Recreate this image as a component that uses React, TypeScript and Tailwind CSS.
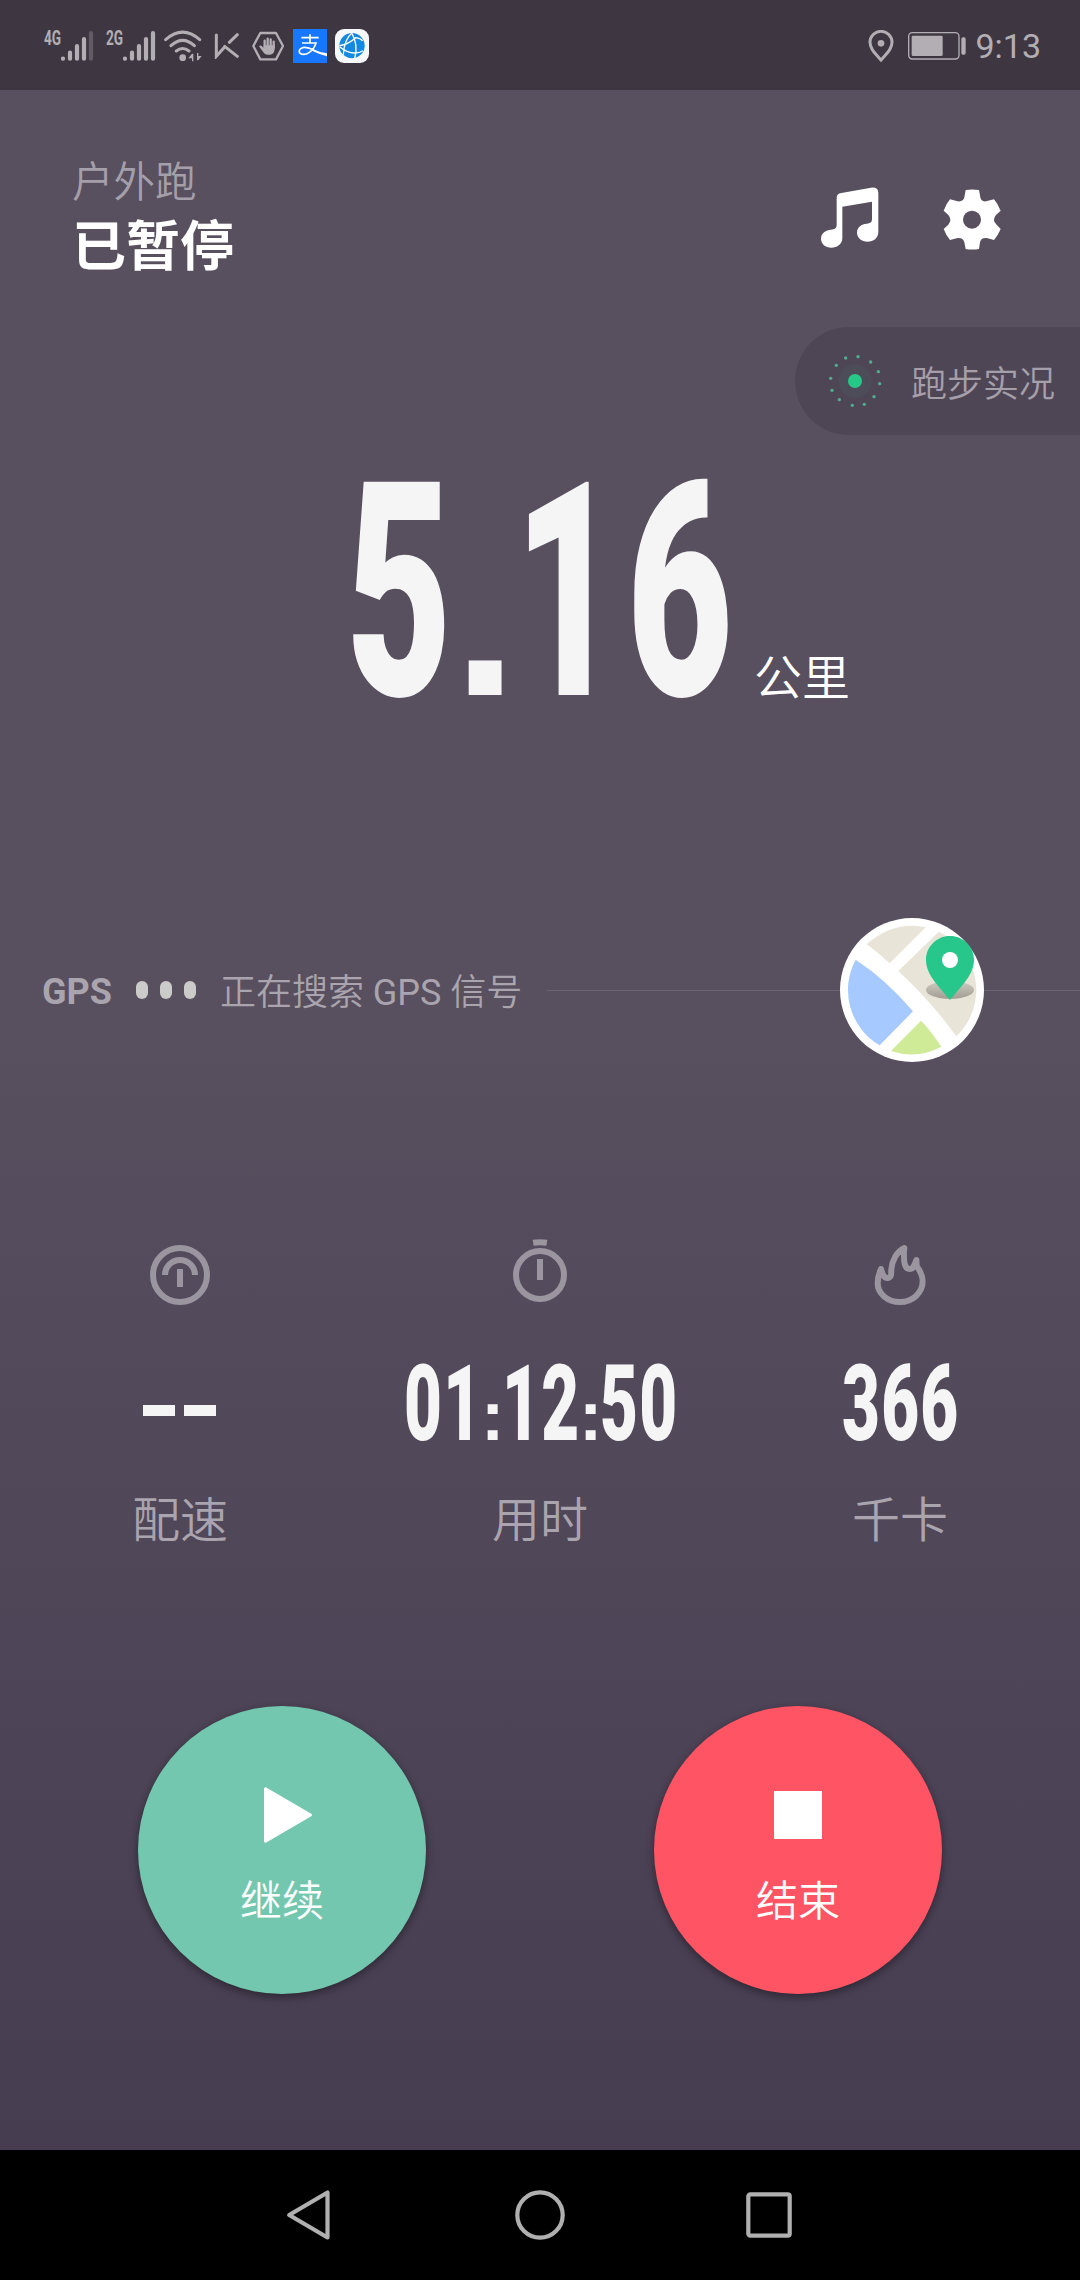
import type { ReactNode } from 'react'

const METRICS = [
  { label: '配速', icon: <PaceIcon /> },
  { label: '用时', icon: <TimerIcon /> },
  { label: '千卡', icon: <FlameIcon /> },
]

const RADAR_DOTS = [
  [197, 594], [234, 590], [272, 606], [295, 635], [299, 671], [282, 710],
  [253, 733], [217, 736], [178, 719], [156, 691], [152, 655], [169, 616],
]

function Signal({ label, full }: { label: string; full?: boolean }) {
  return (
    <div className="flex h-[32px] w-[51px]">
      <span className="w-[17px] origin-left scale-x-[0.68] text-[20px] leading-[16px] font-bold">{label}</span>
      <svg className="h-[32px] w-[34px] shrink-0" viewBox="0 0 34 32" stroke="currentColor" strokeWidth="4.2" strokeLinecap="round">
        <path d="M2 28.600v.1M9 22.500v6.200M16 16v12.700M23 9v19.700" />
        <path d="M30 3v25.700" strokeOpacity={full ? 1 : 0.3} />
      </svg>
    </div>
  )
}

function StatusBar() {
  return (
    <div className="flex h-[90px] shrink-0 items-center bg-[#3e3742] pt-[2px] pr-[39px] pl-[44px] text-[#b3aeb4]">
      <Signal label="4G" />
      <div className="w-[11px]" />
      <Signal label="2G" full />
      {/* Wi-Fi */}
      <svg className="ml-[7px] h-[34px] w-[38px]" viewBox="402 55 114 102" fill="none" stroke="currentColor" strokeWidth="9" strokeLinecap="round">
        <path d="M407 87Q458 42 509 87M423 105Q458 73 493 105M439 121Q458 106 477 121" />
        <circle cx="458" cy="141" r="10" fill="currentColor" stroke="none" />
        <path d="M486 129v23h4v-23zM475 143l11-14v14zM501 127v22h4v-22zM505 149l10-13h-10z" fill="currentColor" stroke="none" />
      </svg>
      {/* Keep */}
      <svg className="ml-[12px] h-[26px] w-[26px]" viewBox="550 70 78 78" fill="none" stroke="currentColor" strokeWidth="9" strokeLinecap="round">
        <path d="M557 76v64L582 112M596 98l24-23M582 110l38 30" />
      </svg>
      {/* Blocker */}
      <svg className="ml-[12px] h-[30px] w-[32px]" viewBox="666 63 96 90" fill="none" stroke="currentColor" strokeWidth="7" strokeLinejoin="round">
        <path d="M670 108L691 69h47l21 39-21 40h-47z" />
        <path d="M704 115V92M713 112V86M722 112V88M731 114V95" strokeLinecap="round" />
        <path d="M701 106h33v12q-2 16-14 16h-8q-8 0-13-9l-12-16q3-5 8-1l6 6z" fill="currentColor" stroke="none" />
      </svg>
      {/* Alipay */}
      <svg className="ml-[9px] h-[34px] w-[34px] bg-[#1777fe]" viewBox="789 57 102 102" fill="none" stroke="#fff" strokeWidth="5">
        <path d="M814 83h52M840 73v26M816 99h42Q852 118 838 127Q822 138 809 129Q804 118 818 113Q832 110 852 121" />
        <path d="M846 116Q866 126 891 130v9Q866 132 846 122z" fill="#fff" stroke="none" />
      </svg>
      {/* Browser */}
      <svg className="ml-[8px] h-[34px] w-[34px] rounded-[9px] bg-[#f6f8fa]" viewBox="915 57 102 102" fill="none">
        <circle cx="966" cy="107" r="38" fill="#1588e0" />
        <path d="M965 69Q986 105 974 145M928 107Q955 103 977 83M974 83Q990 84 998 92M929 110Q950 128 974 129Q990 129 999 122M965 70Q943 88 940 134" stroke="#fff" strokeWidth="4" />
      </svg>

      <svg className="ml-auto h-[32px] w-[26px]" viewBox="54 57 78 96" fill="none" stroke="currentColor" strokeWidth="9">
        <path d="M93 147C76 127 60 114 60 94a33 33 0 0 1 66 0C126 114 110 127 93 147z" />
        <circle cx="93" cy="97" r="10" fill="currentColor" stroke="none" />
      </svg>
      <svg className="ml-[14px] h-[28px] w-[58px]" viewBox="174 65 174 84" fill="none" stroke="currentColor" strokeWidth="4">
        <rect x="176" y="67" width="151" height="79" rx="11" />
        <rect x="185" y="76" width="93" height="61" rx="4" fill="currentColor" stroke="none" />
        <rect x="334" y="81" width="13" height="52" rx="5" fill="currentColor" stroke="none" />
      </svg>
      <span className="ml-[9px] text-[34px] leading-none">9:13</span>
    </div>
  )
}

function Header() {
  return (
    <header className="flex h-[192px] items-start justify-between pr-[79px] pl-[72px]">
      <div className="pt-[63px]">
        <p className="text-[41.5px] leading-[60px] font-[350] text-[#a59faa]">户外跑</p>
        <h1 className="mt-px text-[54px] leading-[68px] font-bold text-white">已暂停</h1>
      </div>
      <div className="flex gap-[64px] pt-[97px]">
        <svg className="h-[62px] w-[58px]" viewBox="121 79 174 186" fill="#fff">
          <path d="M168 112Q168 98 182 97L271 81Q293 79 293 97V213C293 232 278 243 261 243C243 243 229 231 229 216C229 200 243 189 258 189Q274 189 274 176V123L185 138V232C185 250 170 261 152 261C134 261 121 249 121 234C121 218 136 207 151 207Q168 207 168 193Z" />
        </svg>
        <svg className="h-[62px] w-[58px] overflow-visible" viewBox="489 79 174 186" fill="#fff" fillRule="evenodd">
          <path d="M557 88Q576 85 597 88L601 110Q603 124 618 122L642 116Q654 130 662 150L648 163Q636 177 648 190L662 205Q654 224 642 238L620 232Q603 230 600 245L597 265Q576 268 557 265L553 245Q550 231 533 232L510 238Q498 224 491 205L505 192Q517 177 505 163L491 150Q498 130 510 116L533 122Q550 124 553 110ZM603 177a27 27 0 1 0-54 0a27 27 0 1 0 54 0z" />
        </svg>
      </div>
    </header>
  )
}

function LivePill() {
  return (
    <div className="mt-[45px] flex h-[108px] w-[285px] items-center self-end rounded-l-full bg-[#4f4655] pl-[33px]">
      <svg className="h-[54px] w-[54px]" viewBox="144 582 162 162">
        {RADAR_DOTS.map(([x, y]) => (
          <circle key={`${x}-${y}`} cx={x} cy={y} r="5" fill="#4fae92" />
        ))}
        <circle cx="225" cy="663" r="50" fill="#4c4d59" />
        <circle cx="225" cy="663" r="21" fill="#27c788" />
      </svg>
      <span className="ml-[29px] pt-[7px] text-[36px] leading-[52px] font-[350] whitespace-nowrap text-[#a59faa]">跑步实况</span>
    </div>
  )
}

function Distance() {
  return (
    <div className="mt-[29px] flex h-[267px] items-end pl-[346px] font-black text-[#f5f5f5]">
      <div className="flex w-[389px] items-baseline">
        <div className="w-[107px]">
          <span className="inline-block origin-left scale-x-[0.61] text-[300px] leading-[267px]">5</span>
        </div>
        <span className="w-[61px] font-['Liberation_Sans'] text-[232px] leading-none font-bold">.</span>
        <div className="w-[221px]">
          <span className="inline-block origin-left scale-x-[0.61] text-[300px] leading-[267px] tracking-[11px]">16</span>
        </div>
      </div>
      <span className="mb-[17px] ml-[19px] text-[48px] leading-[70px] font-[350] whitespace-nowrap text-white">公里</span>
    </div>
  )
}

function MapButton() {
  return (
    <svg className="h-[144px] w-[144px] shrink-0" viewBox="60 54 432 432">
      <defs>
        <linearGradient id="pinShadow" x1="0" y1="0" x2="0" y2="1">
          <stop offset="0" stopColor="#cfccc1" />
          <stop offset="1" stopColor="#a19d93" />
        </linearGradient>
      </defs>
      <circle cx="276" cy="270" r="216" fill="#fff" />
      <path d="M140 133Q200 78 276 77Q296 77 317 82L209 190Q175 158 140 133z" fill="#e8e5d8" />
      <path d="M356 95A192 192 0 0 1 409 409Q330 300 235 213z" fill="#e8e5d8" />
      <path d="M107 179Q200 240 279 334L179 436A192 192 0 0 1 107 179z" fill="#a6caff" />
      <path d="M303 362Q335 395 364 440A192 192 0 0 1 213 453z" fill="#cfeb98" />
      <ellipse cx="390" cy="270" rx="72" ry="27" fill="url(#pinShadow)" />
      <path d="M390 108C430 108 462 140 462 180C462 222 428 254 390 300C352 254 318 222 318 180C318 140 350 108 390 108z" fill="#27c78b" />
      <circle cx="390" cy="180" r="24" fill="#fff" />
    </svg>
  )
}

function GpsRow() {
  return (
    <div className="mt-[187px] flex h-[144px] items-center pl-[42px] text-[36px] text-[#aaa4ae]">
      <span className="w-[94px] pt-[4px] leading-[52px] font-bold">GPS</span>
      <div className="flex gap-[12px]">
        <i className="h-[18px] w-[12px] rounded-full bg-[#cbcbca]" />
        <i className="h-[18px] w-[12px] rounded-full bg-[#cbcbca]" />
        <i className="h-[18px] w-[12px] rounded-full bg-[#cbcbca]" />
      </div>
      <span className="ml-[24px] w-[327px] pt-[5px] leading-[52px] font-[350] whitespace-nowrap">正在搜索 <span className="font-normal">GPS</span> 信号</span>
      <i className="h-px flex-1 bg-[#6b6371]" />
      <MapButton />
      <i className="h-px w-[96px] bg-[#6b6371]" />
    </div>
  )
}

function PaceIcon() {
  return (
    <svg className="h-[60px] w-[60px]" viewBox="150 75 180 180" fill="none" stroke="#9b95a0" strokeWidth="18">
      <circle cx="240" cy="165" r="81" />
      <path d="M195 165a45 45 0 0 1 90 0M240 147v54" />
    </svg>
  )
}

function TimerIcon() {
  return (
    <svg className="h-[66px] w-[60px] -translate-y-[3px]" viewBox="90 57 180 198" fill="none" stroke="#9b95a0" strokeWidth="18">
      <circle cx="180" cy="165" r="72" />
      <path d="M180 117v63" />
      <path d="M158 59Q180 56 202 59L199 77Q180 75 161 77z" fill="#9b95a0" stroke="none" />
    </svg>
  )
}

function FlameIcon() {
  return (
    <svg className="h-[60px] w-[60px]" viewBox="1170 75 180 180" fill="none" stroke="#9b95a0" strokeWidth="18" strokeLinejoin="round">
      <path d="M1203 147C1194 166 1193 176 1193 190C1193 220 1222 246 1260 246C1298 246 1328 218 1328 184C1328 162 1318 150 1310 139L1309 120C1303 135 1300 147 1290 147C1275 147 1272 125 1272 110Q1271 95 1273 84C1250 95 1236 122 1234 148C1233 160 1237 172 1224 174C1210 175 1206 160 1203 147z" />
    </svg>
  )
}

function Digits({ children }: { children: ReactNode }) {
  return (
    <span className="inline-block w-[39px] origin-left scale-x-[0.62] text-[105.5px] leading-[110px] font-black tracking-[2px]">
      {children}
    </span>
  )
}

function Colon() {
  return <span className="w-[20px] -translate-x-px text-center font-['Liberation_Sans'] text-[70px] leading-[1] font-bold">:</span>
}

function Metrics() {
  const values = [
    <div key="pace" className="mt-[12px] mr-px flex gap-[9px]">
      <i className="h-[11px] w-[32px] bg-[#f5f5f5]" />
      <i className="h-[11px] w-[32px] bg-[#f5f5f5]" />
    </div>,
    <div key="time" className="ml-[2px] flex items-baseline">
      <div className="w-[78px]"><Digits>01</Digits></div>
      <Colon />
      <div className="w-[78px]"><Digits>12</Digits></div>
      <Colon />
      <div className="w-[78px]"><Digits>50</Digits></div>
    </div>,
    <div key="kcal" className="w-[117px]"><Digits>366</Digits></div>,
  ]

  return (
    <section className="mt-[183px] grid grid-cols-3">
      {METRICS.map(({ label, icon }, i) => (
        <div key={label} className="flex flex-col items-center">
          <div className="flex h-[60px] items-center">{icon}</div>
          <div className="mt-[39px] flex h-[120px] items-center text-[#f5f5f5]">{values[i]}</div>
          <span className="mt-[23px] text-[48px] leading-[68px] font-[350] text-[#aaa4ae]">{label}</span>
        </div>
      ))}
    </section>
  )
}

function Controls() {
  return (
    <div className="mt-[151px] flex justify-between px-[138px] text-[42px] leading-[60px] font-[350] text-white">
      <button className="flex h-[288px] w-[288px] flex-col items-center rounded-full bg-[#73c7ae] pt-[80px] shadow-[0_3px_8px_rgba(0,0,0,0.4)]">
        <svg className="ml-[12px] h-[58px] w-[50px]" viewBox="0 0 50 58" fill="#fff" stroke="#fff" strokeWidth="3" strokeLinejoin="round">
          <path d="M2.500 2.700L47.500 29L2.500 55.300z" />
        </svg>
        <span className="mt-[28px]">继续</span>
      </button>
      <button className="flex h-[288px] w-[288px] flex-col items-center rounded-full bg-[#ff5464] pt-[85px] shadow-[0_3px_8px_rgba(0,0,0,0.4)]">
        <i className="h-[48px] w-[48px] bg-white" />
        <span className="mt-[33px]">结束</span>
      </button>
    </div>
  )
}

function NavBar() {
  return (
    <nav className="flex h-[130px] shrink-0 items-center justify-between bg-black pr-[288px] pl-[286px]">
      <svg className="h-[52px] w-[46px]" viewBox="0 0 46 52" fill="none" stroke="#b0b0b0" strokeWidth="4.2" strokeLinejoin="round">
        <path d="M41.500 3.500v45L3.200 26z" />
      </svg>
      <svg className="ml-[2px] h-[50px] w-[50px]" viewBox="0 0 50 50" fill="none" stroke="#b0b0b0" strokeWidth="4.2">
        <circle cx="25" cy="25" r="22.700" />
      </svg>
      <svg className="h-[46px] w-[46px]" viewBox="0 0 46 46" fill="none" stroke="#b0b0b0" strokeWidth="4.2">
        <rect x="2.300" y="2.300" width="41.400" height="41.400" rx="2" />
      </svg>
    </nav>
  )
}

export default function App() {
  return (
    <div className="flex h-[2280px] w-[1080px] flex-col overflow-hidden font-[Roboto,'Noto_Sans_CJK_SC',sans-serif]">
      <StatusBar />
      <main className="flex flex-1 flex-col bg-linear-to-b from-[#584f5f] from-45% to-[#463d51]">
        <Header />
        <LivePill />
        <Distance />
        <GpsRow />
        <Metrics />
        <Controls />
      </main>
      <NavBar />
    </div>
  )
}
